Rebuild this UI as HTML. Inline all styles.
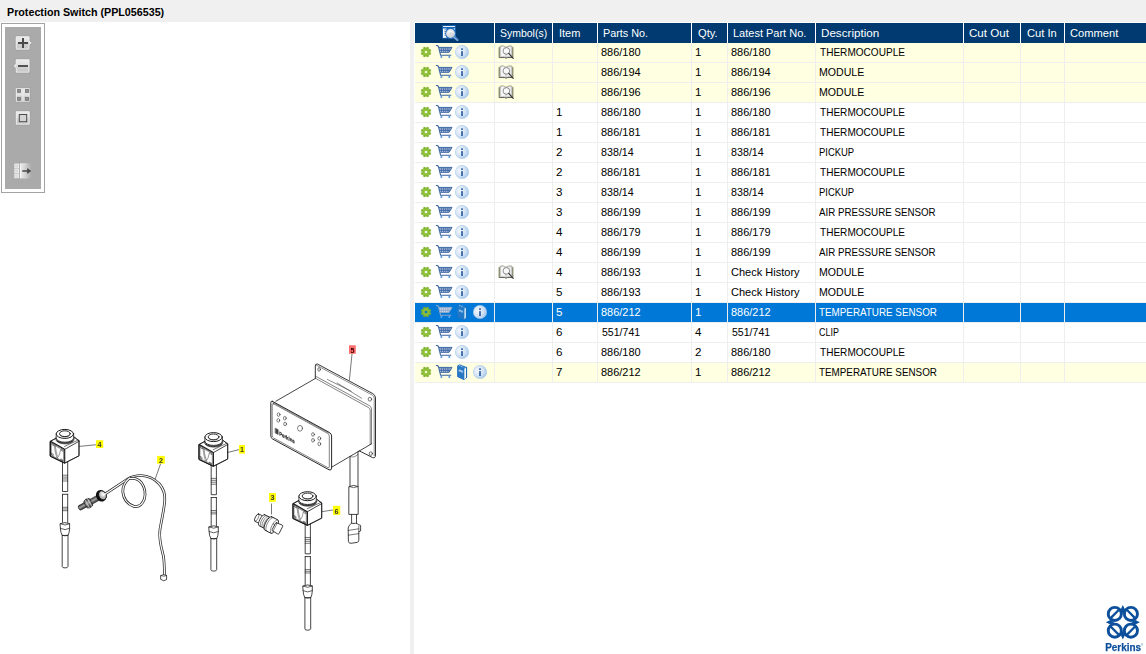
<!DOCTYPE html>
<html><head><meta charset="utf-8"><title>Protection Switch</title>
<style>
html,body{margin:0;padding:0;}
body{width:1146px;height:654px;overflow:hidden;background:#fff;font-family:"Liberation Sans",sans-serif;font-size:11.6px;color:#000;position:relative;}
#title{position:absolute;left:0;top:0;width:1146px;height:22px;background:#f0f0f0;}
#title .t{position:absolute;left:6px;top:3px;font-weight:bold;line-height:18px;}
#split{position:absolute;left:410px;top:22px;width:4px;height:632px;background:#f0f0f0;}
#tb{position:absolute;left:1px;top:23px;width:42px;height:168px;border:1px solid #a3a3a3;background:#fff;}
#tb i{position:absolute;left:3px;top:3px;width:36px;height:162px;background:#aaa;display:block;}
#grid{position:absolute;left:415px;top:23px;width:731px;}
.h{height:20px;background:#003a70;position:relative;color:#fff;}
.h div{position:absolute;top:0;height:20px;line-height:20px;white-space:nowrap;border-left:1px solid #fff;box-sizing:border-box;padding-left:5px;}
.r{height:20px;position:relative;background:#fff;border-bottom:1px solid #eeeeee;box-sizing:border-box;}
.r.y{background:#ffffe1;}
.r.s{background:#0078d7;color:#fff;}
.ct{color:#3c66a4;}
.s .ct{color:#8ea7cb;--bf:#f4f7fb;--wf:#6fb0f0;}
.s .k{opacity:.8;}
.c{position:absolute;top:0;height:19px;line-height:17px;white-space:nowrap;box-sizing:border-box;border-left:1px solid #eeeeee;padding-left:3px;}
.c0{left:0;width:79px;border-left:none;}
.c1{left:79px;width:58px;}
.c2{left:137px;width:45px;}
.c3{left:182px;width:94px;}
.c4{left:276px;width:36px;}
.c5{left:312px;width:88px;}
.c6{left:400px;width:148px;}
.c7{left:548px;width:57px;}
.c8{left:605px;width:44px;}
.c9{left:649px;width:82px;}
.t{display:inline-block;transform-origin:0 50%;white-space:nowrap;}
#dw,#logo{will-change:transform;}
.ic{position:absolute;overflow:visible;display:block;}
.g{left:5px;top:3px;width:12px;height:12px;}
.ct{left:21px;top:2px;width:17px;height:14px;}
.i1{left:40px;top:2px;width:14px;height:14px;}
.i2{left:58px;top:2px;width:14px;height:14px;}
.k{left:42px;top:1px;width:11px;height:17px;}
.sb{left:3px;top:2px;width:17px;height:14px;}
.hi{left:27px;top:2px;width:17px;height:17px;}
</style></head><body>
<svg width="0" height="0" style="position:absolute"><defs>
<radialGradient id="gi" cx="0.35" cy="0.4" r="0.7"><stop offset="0" stop-color="#f4f8fd"/><stop offset="0.55" stop-color="#d3e3f4"/><stop offset="1" stop-color="#9fc3e8"/></radialGradient>
<radialGradient id="gg" cx="0.5" cy="0.5" r="0.5"><stop offset="0" stop-color="#a6d444"/><stop offset="0.6" stop-color="#8cbf34"/><stop offset="1" stop-color="#76aa26"/></radialGradient>
<linearGradient id="gl" x1="0" y1="0" x2="1" y2="1"><stop offset="0" stop-color="#f2f4f6"/><stop offset="1" stop-color="#c4cad2"/></linearGradient>
<!-- gear: 12x12 box, centre 6,6 -->
<symbol id="gear" viewBox="0 0 12 12" overflow="visible"><path d="M9.68 6.41 L10.91 6.94 L10.14 8.81 L8.89 8.31 L8.31 8.89 L8.81 10.14 L6.94 10.91 L6.41 9.68 L5.59 9.68 L5.06 10.91 L3.19 10.14 L3.69 8.89 L3.11 8.31 L1.86 8.81 L1.09 6.94 L2.32 6.41 L2.32 5.59 L1.09 5.06 L1.86 3.19 L3.11 3.69 L3.69 3.11 L3.19 1.86 L5.06 1.09 L5.59 2.32 L6.41 2.32 L6.94 1.09 L8.81 1.86 L8.31 3.11 L8.89 3.69 L10.14 3.19 L10.91 5.06 L9.68 5.59Z M7.6 6 A1.6 1.6 0 1 0 4.4 6 A1.6 1.6 0 1 0 7.6 6 Z" fill="url(#gg)" fill-rule="evenodd" stroke="#7fb22b" stroke-width="0.6" stroke-linejoin="round"/></symbol>
<!-- cart: 17x14 box -->
<symbol id="cart" viewBox="0 0 17 14" overflow="visible">
<path d="M2.6 2.3 L16 2.3 L13 7.4 L4.4 7.4 Z" style="fill:var(--bf,#dfe8f4)" stroke="none"/>
<path d="M0.4 0.5 L1.6 0.6 L2.5 1.6 L4.6 10.3 L14.8 10.3" fill="none" stroke="currentColor" stroke-width="1.1" stroke-linejoin="round" stroke-linecap="round"/>
<path d="M2.6 2.4 L16 2.4 L13.1 7.3 L4 7.3" fill="none" stroke="currentColor" stroke-width="1" stroke-linejoin="round"/>
<path d="M3.2 4 L15 4 M3.6 5.6 L14 5.6" stroke="currentColor" stroke-width="0.9"/>
<path d="M5.3 2.6 L5.6 7.2 M7.3 2.6 L7.5 7.2 M9.3 2.6 L9.3 7.2 M11.3 2.6 L11.1 7.2 M13.2 2.6 L12.7 7.2" stroke="currentColor" stroke-width="0.8"/>
<circle cx="5.4" cy="11.9" r="1" style="fill:var(--wf,#4b93e0)"/><circle cx="13.3" cy="11.9" r="1" style="fill:var(--wf,#4b93e0)"/>
</symbol>
<!-- info: 14x14 box, centre 7,7 -->
<symbol id="info" viewBox="0 0 14 14" overflow="visible"><circle cx="7" cy="7" r="6.8" fill="url(#gi)"/><circle cx="7" cy="7" r="6.6" fill="none" stroke="#a5c6e8" stroke-width="0.5"/><rect x="6.1" y="3.3" width="1.8" height="1.7" fill="#3a67a6"/><rect x="6.1" y="6.1" width="1.8" height="4.9" fill="#3a67a6"/></symbol>
<!-- blue book: 11x17 box -->
<symbol id="bk" viewBox="0 0 11 17" overflow="visible">
<path d="M0.3 1.8 L2.6 0.3 L10.1 3.2 L10.1 13.4 L7 16 L0.3 12.8 Z" fill="#1f6db8"/>
<path d="M0.3 1.8 L7 4.5 L7 16 L0.3 12.8 Z" fill="#2878c4"/>
<path d="M7.3 4.6 L9 3.6 L9 13.6 L7.3 15.4 Z" fill="#f4f8fc"/>
<path d="M1 1.9 L2.7 0.9 L9.3 3.4 L7.4 4.4 Z" fill="#3f8ad2"/>
<path d="M2.2 1.6 L3.4 1.2 M4.2 2.4 L5.4 2" stroke="#d8e8f8" stroke-width="0.8"/>
<ellipse cx="2.9" cy="6.6" rx="1.3" ry="1.1" fill="#a9c8ea" transform="rotate(20 2.9 6.6)"/><ellipse cx="4.9" cy="7.5" rx="1.3" ry="1.1" fill="#a9c8ea" transform="rotate(20 4.9 7.5)"/>
</symbol>
<!-- symbol book with magnifier: 17x14 box -->
<symbol id="sym" viewBox="0 0 17 14" overflow="visible">
<path d="M1 2.2 L2.6 2.2 L2.6 0.9 L5.2 0.9 L8 2.2 L10.8 0.9 L13.6 0.9 L13.6 2.2 L15 2.2 L15 12.6 L9.5 12.6 L8 13.2 L6.5 12.6 L1 12.6 Z" fill="#d9d9d2" stroke="#8a8a70" stroke-width="0.6"/>
<path d="M2.6 1.5 L5.2 1.2 L8 2.6 L8 12.6 L6 11.6 L2.6 11.8 Z" fill="#f6f6f6" stroke="#999" stroke-width="0.4"/>
<path d="M13.6 1.5 L10.8 1.2 L8 2.6 L8 12.6 L10 11.6 L13.6 11.8 Z" fill="#ececec" stroke="#999" stroke-width="0.4"/>
<path d="M1.3 2.4 L1.3 12.4 M14.7 2.4 L14.7 12.4" stroke="#77775a" stroke-width="0.8"/>
<path d="M1.2 12.5 L6.5 12.5 L8 13.1 L9.5 12.5 L14.8 12.5" fill="none" stroke="#444" stroke-width="0.7"/>
<circle cx="8.4" cy="5.9" r="3.3" fill="#fff" fill-opacity="0.8" stroke="#555" stroke-width="0.65"/>
<path d="M10.8 8.3 L15.2 13.4" stroke="#333" stroke-width="1.15" stroke-linecap="round"/>
</symbol>
<!-- header icon: 17x17 box -->
<symbol id="hic" viewBox="0 0 17 17" overflow="visible">
<rect x="0.2" y="0.2" width="13.6" height="13.5" fill="#1668ba"/>
<rect x="1" y="1.1" width="11.9" height="0.9" fill="#fff"/>
<rect x="1" y="3.5" width="3.4" height="9.3" fill="#fff"/>
<rect x="11.6" y="3.4" width="1.3" height="1.3" fill="#e8f0fa"/>
<path d="M2.4 4.8 h1.6 M2.4 6.6 h1.6 M2.4 8.4 h1.6 M2.4 10.2 h1.6" stroke="#2a5a98" stroke-width="0.8"/>
<circle cx="8.6" cy="8.5" r="5.3" fill="#2a70bc"/>
<circle cx="8.6" cy="8.5" r="4.4" fill="url(#gl)"/>
<path d="M6 7.2 Q8.5 5.2 11.4 7.4" stroke="#fff" stroke-width="1" fill="none" stroke-opacity="0.9"/>
<path d="M12.2 11.9 L15.4 14.9" stroke="#7fa8da" stroke-width="2.3" stroke-linecap="round"/>
<path d="M12.6 11.5 L16 14.7" stroke="#2a66b0" stroke-width="0.7" stroke-linecap="round"/>
</symbol>
</defs></svg>
<div id="title"><span class="t" style="transform:scaleX(0.9241);margin-left:0.60px">Protection Switch (PPL056535)</span></div>
<div id="split"></div>
<div id="tb"><i></i></div>
<svg id="tbs" width="50" height="180" viewBox="0 22 50 180" style="position:absolute;left:0;top:22px">
<defs>
<linearGradient id="bg1" x1="0" y1="0" x2="0" y2="1"><stop offset="0" stop-color="#ececec"/><stop offset="0.48" stop-color="#dedede"/><stop offset="0.52" stop-color="#d2d2d2"/><stop offset="1" stop-color="#c4c4c4"/></linearGradient>
<linearGradient id="bg2" x1="0" y1="0" x2="1" y2="0"><stop offset="0" stop-color="#f0f0f0"/><stop offset="0.55" stop-color="#cacaca"/><stop offset="1" stop-color="#aaaaaa"/></linearGradient>
</defs>
<!-- zoom in -->
<path d="M15.4 36 H29.8 V41 L32.4 43 L29.8 45 V50 H15.4 Z" fill="url(#bg1)" stroke="#9c9c9c" stroke-width="0.7"/>
<path d="M16.3 36.9 H28.9 V41.4 L31 43 L28.9 44.6 V49.1 H16.3 Z" fill="none" stroke="#ececec" stroke-width="0.9"/>
<path d="M18 43 H28 M23 38 V48" stroke="#4a4a4a" stroke-width="2"/>
<!-- zoom out -->
<path d="M15.4 59 H29.8 V73 H15.4 V68 L12.8 66 L15.4 64 Z" fill="url(#bg1)" stroke="#9c9c9c" stroke-width="0.7"/>
<path d="M16.3 59.9 H28.9 V72.1 H16.3 V67.6 L14.2 66 L16.3 64.4 Z" fill="none" stroke="#ececec" stroke-width="0.9"/>
<path d="M18 66 H28" stroke="#525252" stroke-width="2"/>
<!-- grid -->
<rect x="15.4" y="88" width="14.6" height="14" fill="url(#bg1)" stroke="#9c9c9c" stroke-width="0.7"/>
<rect x="16.3" y="88.9" width="12.8" height="12.2" fill="none" stroke="#ececec" stroke-width="0.9"/>
<path d="M23.1 89.4 V100.6 M16.6 95 H28.8" stroke="#e8e8e8" stroke-width="1.2"/>
<g fill="#8e8e8e" stroke="#727272" stroke-width="0.7"><rect x="17.6" y="89.6" width="3" height="2.9"/><rect x="25.5" y="89.6" width="3.3" height="2.9"/><rect x="17.6" y="97.5" width="3" height="3.1"/><rect x="25.5" y="97.5" width="3.3" height="3.1"/></g>
<!-- single -->
<rect x="15.4" y="111" width="14.6" height="14" fill="url(#bg1)" stroke="#9c9c9c" stroke-width="0.7"/>
<rect x="16.3" y="111.9" width="12.8" height="12.2" fill="none" stroke="#ececec" stroke-width="0.9"/>
<rect x="19.3" y="114.5" width="7.4" height="7.2" fill="#d4d4d4" stroke="#4c4c4c" stroke-width="1"/>
<!-- export -->
<rect x="20" y="163.6" width="11.5" height="14.6" fill="url(#bg2)"/>
<path d="M20.4 163.6 V178.2" stroke="#f6f6f6" stroke-width="1"/>
<path d="M20 163.9 H27" stroke="#f0f0f0" stroke-width="0.6"/><path d="M20 178 H27" stroke="#e0e0e0" stroke-width="0.6"/>
<g fill="#dadada" stroke="#f0f0f0" stroke-width="0.8"><rect x="14.8" y="164" width="3.8" height="3.8"/><rect x="14.8" y="169" width="3.8" height="3.8"/><rect x="14.8" y="174" width="3.8" height="3.8"/></g>
<path d="M22.2 171 H28" stroke="#484848" stroke-width="1.5"/><path d="M27.2 168 L31.2 171 L27.2 174 Z" fill="#484848"/>
</svg>
<svg id="dw" width="410" height="632" viewBox="0 22 410 632" style="position:absolute;left:0;top:22px" fill="none" stroke="#1c1c1c" stroke-width="0.82" stroke-linecap="round" stroke-linejoin="round">
<!-- control box (5) -->
<g>
<!-- back plate -->
<path d="M315.3 366 Q315.3 363.6 317.4 364 L372.8 393.6 Q375.5 395.2 375.5 398 L375.5 455 Q375.5 458.4 372.8 457.4 L358.8 450.6 L331.6 467.4 L271 437.4 L271 402.6 L276 401 L315.3 378.4 Z" fill="#fff" stroke="none"/>
<path d="M315.3 378.4 L315.3 366 Q315.3 363.6 317.4 364 L372.8 393.6 Q375.5 395.2 375.5 398 L375.5 455 Q375.5 458.6 372.6 457.6 L359.2 450.8" stroke-width="0.9"/>
<path d="M316.6 365.3 L372.2 395 Q374.2 396.2 374.2 398.4 L374.2 455.6" stroke-width="0.5"/>
<ellipse cx="319.1" cy="369.4" rx="1.3" ry="1.8" stroke-width="0.6"/>
<ellipse cx="369.9" cy="399.2" rx="1.7" ry="1.9" stroke-width="0.6"/>
<ellipse cx="370.8" cy="453.6" rx="1.6" ry="1.8" stroke-width="0.6"/>
<!-- plate inner lines -->
<path d="M315.6 376.2 L369.6 405.8 Q371.5 407 371.5 409 L371.5 443.8 M316 378.6 L368.6 407.6 Q370.2 408.6 370.2 410.6 L370.2 444.4" stroke-width="0.55"/>
<path d="M327.3 379.4 L351.2 391.2 M337.1 383 L361.6 398.3" stroke-width="0.5"/>
<!-- box top-left edge -->
<path d="M275.9 401.2 L315.3 378.5"/>
<!-- box bottom-right edge -->
<path d="M331.6 467.2 L371.4 443.9"/>
<!-- bezel outer -->
<path d="M272.4 401.3 L329.6 432.6 Q331.6 433.8 331.6 436 L331.6 468 Q331.6 470.8 329 469.8 L272.6 439 Q270.8 438 270.8 435.8 L270.8 402.6 Q270.8 400.6 272.4 401.3 Z" fill="#fff" stroke-width="0.95"/>
<!-- bezel inner -->
<path d="M273.6 403.8 L327.6 433.4 Q329.3 434.4 329.3 436.4 L329.3 466.8 Q329.3 468.4 327.8 467.6 L273.6 438 Q272.2 437.2 272.2 435.6 L272.2 404.6 Q272.2 403.2 273.6 403.8 Z" stroke-width="0.55"/>
<path d="M273.2 402.6 L329.4 433.3" stroke-width="0.5"/>
<!-- holes -->
<g stroke-width="0.55">
<ellipse cx="278.6" cy="414.6" rx="1.4" ry="1.8"/><ellipse cx="278.3" cy="420.4" rx="1.4" ry="1.8"/><ellipse cx="284.8" cy="418.2" rx="1.4" ry="1.8"/><ellipse cx="285.1" cy="424" rx="1.4" ry="1.8"/>
<ellipse cx="300" cy="428.3" rx="2.5" ry="2.9"/>
<ellipse cx="313" cy="434.4" rx="1.4" ry="1.8"/><ellipse cx="313" cy="440.3" rx="1.4" ry="1.8"/><ellipse cx="319.3" cy="438.4" rx="1.4" ry="1.8"/><ellipse cx="319.3" cy="443.9" rx="1.4" ry="1.8"/>
</g>
<!-- tiny brand on front -->
<path d="M275.4 428.2 L278.2 429.7 L278.2 434.6 L275.4 433.1 Z" fill="#444" stroke-width="0.4"/>
<text transform="matrix(1 0.54 0 1 279.2 435.2)" font-family="Liberation Sans, sans-serif" font-weight="bold" font-size="5.4" fill="#333" stroke="#333" stroke-width="0.25" textLength="15.5" lengthAdjust="spacingAndGlyphs">Perkins</text>
<!-- cable under the box -->
<path d="M350 456.6 L350 485.8 M358 451.6 L358 485.8" />
<path d="M350.2 456.4 Q354 458.6 357.8 454.4" stroke-width="0.5"/>
<path d="M349.2 486.6 Q353.7 484.2 358.2 486.6 L358.2 514.4 L349.2 514.4 Z" fill="#fff"/>
<path d="M349.2 486.6 Q353.7 489 358.2 486.6" stroke-width="0.6"/>
<path d="M351.6 514.6 V523.6 M356.5 514.6 V523.4"/>
<path d="M351 523.6 Q348.4 525.4 348.2 528 L348.4 541.4 Q348.6 543.4 351 543.3 L357.2 542.4 Q358.8 542 358.8 540.2 L358.8 531.6 L360.6 531 L360.6 525.4 L358.6 524.6 Q357.4 523.4 356 523.4 Z" fill="#fff"/>
<path d="M348.3 530.4 L358.8 528.8 M348.3 535.2 L358.8 533.6 M358.8 531.6 L358.8 526" stroke-width="0.6"/>
</g>
<!-- leader 5 -->
<path d="M352 354.2 L349.4 380" stroke-width="0.6"/>
<rect x="349" y="345.3" width="6.8" height="8.5" fill="#ff6e6e" stroke="none"/>
<text x="352.4" y="352.6" text-anchor="middle" font-family="Liberation Sans, sans-serif" font-weight="bold" font-size="7.2" fill="#3a0000" stroke="none">5</text>
<g transform="translate(0 0)"><path d="M50.4 441.3 L56.2 438.1 L73.9 436.8 L79 440.8 L79 455.8 L64.7 463.1 L50.4 456.2 Z" fill="#fff"/><path d="M64.7 449.4 L79 441.3 M79 440.8 L79 455.8 L64.7 463.1"/><path d="M50.4 441.3 L56.3 438.1 M79 440.8 L73.9 436.8"/><path d="M64.5 446.5 L78.3 440" stroke-width="0.6"/><path d="M50.9 441.5 L64.2 449.1 Q64.7 449.4 64.7 450 L64.7 462.4 Q64.7 463.2 64 462.8 L50.9 456.5 Q50.4 456.2 50.4 455.6 L50.4 441.9 Q50.4 441.2 50.9 441.5 Z" stroke-width="1.15"/><path d="M51.6 442.7 L63.6 449.6 L63.6 461.4 L51.6 455.6 Z" stroke-width="0.5"/><path d="M52.2 443.4 l1.5 .9 l0 1.5 l-1.5 -.9z M61.5 449 l1.5 .9 l0 1.5 l-1.5 -.9z M51.8 453.4 l1.5 .8 l0 1.5 l-1.5 -.8z M61.2 459 l1.4 .8 l0 1.5 l-1.4 -.8z" stroke-width="0.5"/><path d="M54.3 445 Q55.4 455.6 57.3 458 Q59.6 456 60.7 449.6 M55.3 445.6 Q56.4 455 57.6 456.4 M55 445.6 Q57.6 447.4 60 448.4" stroke-width="0.45"/><g transform="translate(0 0.5)"><path d="M55.8 437.6 A9.1 4.4 0 0 0 74 437.6 L74 439 A9.1 4.4 0 0 1 55.8 439 Z" fill="#fff" stroke-width="0.7"/><path d="M57 440.6 A9.1 4.2 0 0 0 72.8 440.6" stroke-width="1"/><path d="M56.2 433.4 L56.2 437.4 A8.7 4.3 0 0 0 73.6 437.4 L73.6 433.4 Z" fill="#fff"/><ellipse cx="64.9" cy="433.4" rx="8.7" ry="4.5" fill="#fff" stroke-width="1"/><ellipse cx="64.9" cy="433.2" rx="5.4" ry="2.9" stroke-width="0.9"/><path d="M59.8 434.4 A5.4 2.9 0 0 0 70 434.4" stroke-width="0.5"/></g><path d="M62.5 462 L62.5 491.5 L67.7 491.5 L67.7 461.6"/><path d="M62.5 475.2 H67.7 M62.5 477.1 H67.7 M62.5 479 H67.7 M62.5 481 H67.7" stroke-width="0.6"/><path d="M62.5 494.3 H67.7 M62.5 494.3 V522.6 M67.7 494.3 V522.6"/><path d="M62.5 507.3 H67.7 M62.5 509 H67.7 M62.5 510.7 H67.7" stroke-width="0.6"/><path d="M60.4 523.6 Q65 521.6 69.6 523.6 L69.6 528.6 Q69.4 533 68 535.4 L62.2 535.4 Q60.6 533 60.4 528.6 Z" fill="#fff"/><path d="M60.4 523.8 Q65 526.4 69.6 523.8 M60.4 528.4 Q65 531 69.6 528.4 M62.2 535.3 Q65 536.6 68 535.3" stroke-width="0.7"/><path d="M62.2 535.6 V566.6 Q62.3 567.9 65 567.9 Q67.8 567.9 68 566.6 V535.6"/></g>
<g transform="translate(148.7 3.2)"><path d="M50.4 441.3 L56.2 438.1 L73.9 436.8 L79 440.8 L79 455.8 L64.7 463.1 L50.4 456.2 Z" fill="#fff"/><path d="M64.7 449.4 L79 441.3 M79 440.8 L79 455.8 L64.7 463.1"/><path d="M50.4 441.3 L56.3 438.1 M79 440.8 L73.9 436.8"/><path d="M64.5 446.5 L78.3 440" stroke-width="0.6"/><path d="M50.9 441.5 L64.2 449.1 Q64.7 449.4 64.7 450 L64.7 462.4 Q64.7 463.2 64 462.8 L50.9 456.5 Q50.4 456.2 50.4 455.6 L50.4 441.9 Q50.4 441.2 50.9 441.5 Z" stroke-width="1.15"/><path d="M51.6 442.7 L63.6 449.6 L63.6 461.4 L51.6 455.6 Z" stroke-width="0.5"/><path d="M52.2 443.4 l1.5 .9 l0 1.5 l-1.5 -.9z M61.5 449 l1.5 .9 l0 1.5 l-1.5 -.9z M51.8 453.4 l1.5 .8 l0 1.5 l-1.5 -.8z M61.2 459 l1.4 .8 l0 1.5 l-1.4 -.8z" stroke-width="0.5"/><path d="M54.3 445 Q55.4 455.6 57.3 458 Q59.6 456 60.7 449.6 M55.3 445.6 Q56.4 455 57.6 456.4 M55 445.6 Q57.6 447.4 60 448.4" stroke-width="0.45"/><g transform="translate(0 0.5)"><path d="M55.8 437.6 A9.1 4.4 0 0 0 74 437.6 L74 439 A9.1 4.4 0 0 1 55.8 439 Z" fill="#fff" stroke-width="0.7"/><path d="M57 440.6 A9.1 4.2 0 0 0 72.8 440.6" stroke-width="1"/><path d="M56.2 433.4 L56.2 437.4 A8.7 4.3 0 0 0 73.6 437.4 L73.6 433.4 Z" fill="#fff"/><ellipse cx="64.9" cy="433.4" rx="8.7" ry="4.5" fill="#fff" stroke-width="1"/><ellipse cx="64.9" cy="433.2" rx="5.4" ry="2.9" stroke-width="0.9"/><path d="M59.8 434.4 A5.4 2.9 0 0 0 70 434.4" stroke-width="0.5"/></g><path d="M62.5 462 L62.5 491.5 L67.7 491.5 L67.7 461.6"/><path d="M62.5 475.2 H67.7 M62.5 477.1 H67.7 M62.5 479 H67.7 M62.5 481 H67.7" stroke-width="0.6"/><path d="M62.5 494.3 H67.7 M62.5 494.3 V522.6 M67.7 494.3 V522.6"/><path d="M62.5 507.3 H67.7 M62.5 509 H67.7 M62.5 510.7 H67.7" stroke-width="0.6"/><path d="M60.4 523.6 Q65 521.6 69.6 523.6 L69.6 528.6 Q69.4 533 68 535.4 L62.2 535.4 Q60.6 533 60.4 528.6 Z" fill="#fff"/><path d="M60.4 523.8 Q65 526.4 69.6 523.8 M60.4 528.4 Q65 531 69.6 528.4 M62.2 535.3 Q65 536.6 68 535.3" stroke-width="0.7"/><path d="M62.2 535.6 V566.6 Q62.3 567.9 65 567.9 Q67.8 567.9 68 566.6 V535.6"/></g>
<g transform="translate(242.7 62.3)"><path d="M50.4 441.3 L56.2 438.1 L73.9 436.8 L79 440.8 L79 455.8 L64.7 463.1 L50.4 456.2 Z" fill="#fff"/><path d="M64.7 449.4 L79 441.3 M79 440.8 L79 455.8 L64.7 463.1"/><path d="M50.4 441.3 L56.3 438.1 M79 440.8 L73.9 436.8"/><path d="M64.5 446.5 L78.3 440" stroke-width="0.6"/><path d="M50.9 441.5 L64.2 449.1 Q64.7 449.4 64.7 450 L64.7 462.4 Q64.7 463.2 64 462.8 L50.9 456.5 Q50.4 456.2 50.4 455.6 L50.4 441.9 Q50.4 441.2 50.9 441.5 Z" stroke-width="1.15"/><path d="M51.6 442.7 L63.6 449.6 L63.6 461.4 L51.6 455.6 Z" stroke-width="0.5"/><path d="M52.2 443.4 l1.5 .9 l0 1.5 l-1.5 -.9z M61.5 449 l1.5 .9 l0 1.5 l-1.5 -.9z M51.8 453.4 l1.5 .8 l0 1.5 l-1.5 -.8z M61.2 459 l1.4 .8 l0 1.5 l-1.4 -.8z" stroke-width="0.5"/><path d="M54.3 445 Q55.4 455.6 57.3 458 Q59.6 456 60.7 449.6 M55.3 445.6 Q56.4 455 57.6 456.4 M55 445.6 Q57.6 447.4 60 448.4" stroke-width="0.45"/><g transform="translate(0 0.5)"><path d="M55.8 437.6 A9.1 4.4 0 0 0 74 437.6 L74 439 A9.1 4.4 0 0 1 55.8 439 Z" fill="#fff" stroke-width="0.7"/><path d="M57 440.6 A9.1 4.2 0 0 0 72.8 440.6" stroke-width="1"/><path d="M56.2 433.4 L56.2 437.4 A8.7 4.3 0 0 0 73.6 437.4 L73.6 433.4 Z" fill="#fff"/><ellipse cx="64.9" cy="433.4" rx="8.7" ry="4.5" fill="#fff" stroke-width="1"/><ellipse cx="64.9" cy="433.2" rx="5.4" ry="2.9" stroke-width="0.9"/><path d="M59.8 434.4 A5.4 2.9 0 0 0 70 434.4" stroke-width="0.5"/></g><path d="M62.5 462 L62.5 491.5 L67.7 491.5 L67.7 461.6"/><path d="M62.5 475.2 H67.7 M62.5 477.1 H67.7 M62.5 479 H67.7 M62.5 481 H67.7" stroke-width="0.6"/><path d="M62.5 494.3 H67.7 M62.5 494.3 V522.6 M67.7 494.3 V522.6"/><path d="M62.5 507.3 H67.7 M62.5 509 H67.7 M62.5 510.7 H67.7" stroke-width="0.6"/><path d="M60.4 523.6 Q65 521.6 69.6 523.6 L69.6 528.6 Q69.4 533 68 535.4 L62.2 535.4 Q60.6 533 60.4 528.6 Z" fill="#fff"/><path d="M60.4 523.8 Q65 526.4 69.6 523.8 M60.4 528.4 Q65 531 69.6 528.4 M62.2 535.3 Q65 536.6 68 535.3" stroke-width="0.7"/><path d="M62.2 535.6 V566.6 Q62.3 567.9 65 567.9 Q67.8 567.9 68 566.6 V535.6"/></g>
<!-- cable (2) -->
<defs>
<linearGradient id="pg" x1="0" y1="0" x2="0" y2="1"><stop offset="0" stop-color="#3c3c3c"/><stop offset="0.45" stop-color="#a2a2a2"/><stop offset="1" stop-color="#2e2e2e"/></linearGradient>
<radialGradient id="pr" cx="0.6" cy="0.4" r="0.6"><stop offset="0" stop-color="#ffffff"/><stop offset="1" stop-color="#9a9a9a"/></radialGradient>
</defs>
<g>
<path id="cb2" d="M104.5 494.4 L128 478.8 Q133 475.6 141 475.5 Q152 476 159.4 484 Q165.4 491 164.8 500 C164.4 508 161.5 520 159.9 530 C158.6 540 162 550 163.4 556 C164.4 562 164.4 568 164.4 574.4" stroke="#2a2a2a" stroke-width="2.7"/>
<path d="M104.5 494.4 L128 478.8 Q133 475.6 141 475.5 Q152 476 159.4 484 Q165.4 491 164.8 500 C164.4 508 161.5 520 159.9 530 C158.6 540 162 550 163.4 556 C164.4 562 164.4 568 164.4 574.4" stroke="#fff" stroke-width="1.2"/>
<path d="M129.6 478 Q122.4 484 122.8 492 Q124 503 134 506.4 Q141 507.6 144.4 499 Q146.6 490 141.6 483 Q137 477.6 130.6 478.6" stroke="#2a2a2a" stroke-width="2.7"/>
<path d="M129.6 478 Q122.4 484 122.8 492 Q124 503 134 506.4 Q141 507.6 144.4 499 Q146.6 490 141.6 483 Q137 477.6 130.6 478.6" stroke="#fff" stroke-width="1.2"/>
<path d="M161 575.4 Q163.8 574 166.6 575.4 L166.6 579.6 Q163.8 582 161 579.6 Z" fill="#fff" stroke-width="0.8"/>
<path d="M161 575.6 Q163.8 577.4 166.6 575.6" stroke-width="0.5"/>
<!-- probe -->
<g transform="translate(80.2 507.7) rotate(-28.8)">
<rect x="-1.6" y="-2.4" width="9" height="4.8" rx="1.6" fill="url(#pg)" stroke="#222" stroke-width="0.7"/>
<rect x="10" y="-2.7" width="12" height="5.4" fill="url(#pg)" stroke="#333" stroke-width="0.5"/>
<path d="M6.2 -3.6 L8 -4.6 L10.8 -4.6 L12.4 -3.6 L12.4 3.6 L10.8 4.6 L8 4.6 L6.2 3.6 Z" fill="url(#pg)" stroke="#222" stroke-width="0.7"/>
<path d="M8 -4.6 V4.6 M10.8 -4.6 V4.6" stroke="#eee" stroke-width="0.6"/>
</g>
<ellipse cx="101.2" cy="495.8" rx="5.1" ry="5.9" fill="#111" stroke="none" transform="rotate(-28 101.2 495.8)"/>
<ellipse cx="102.5" cy="495.3" rx="3.7" ry="4.7" fill="url(#pr)" stroke="#111" stroke-width="0.8" transform="rotate(-28 102.5 495.3)"/>
<path d="M103.4 495.2 L106 493.4" stroke="#fff" stroke-width="1.2"/>
</g>
<path d="M160.5 464 L155.3 478.7" stroke-width="0.6"/>
<rect x="157.1" y="455.9" width="7.7" height="7.8" fill="#ffff00" stroke="none"/>
<text x="160.9" y="462.6" text-anchor="middle" font-family="Liberation Sans, sans-serif" font-weight="bold" font-size="7.2" fill="#333" stroke="none">2</text>
<!-- part 3 -->
<g transform="translate(256.8 517.6) rotate(27) scale(0.94)">
<path d="M0 -4.4 L7 -4.4 L7 4.4 L0 4.4 A1.6 4.4 0 0 1 0 -4.4 Z" fill="#fff"/>
<path d="M0 -4.4 A1.6 4.4 0 0 1 0 4.4" stroke-width="0.5"/>
<path d="M6 -6.6 L14 -6.6 L14 6.6 L6 6.6 A2.2 6.6 0 0 1 6 -6.6 Z" fill="#fff"/>
<path d="M8 -6.6 A2.2 6.6 0 0 0 8 6.6 M10 -6.6 A2.2 6.6 0 0 0 10 6.6 M12 -6.6 A2.2 6.6 0 0 0 12 6.6" stroke-width="0.5"/>
<path d="M13.6 -8 L21 -8 A2.8 8 0 0 1 21 8 L13.6 8 A2.8 8 0 0 1 13.6 -8 Z" fill="#fff" stroke-width="0.9"/>
<path d="M15.6 -8 A2.8 8 0 0 0 15.6 8 M21 -8 A2.8 8 0 0 0 21 8" stroke-width="0.5"/>
<path d="M21.4 -4.6 L27.6 -5.2 Q28.8 -5 28.8 -4 L28.8 4.4 Q28.8 5.4 27.6 5.4 L21.4 5 Q20.4 4.8 20.4 3.8 L20.4 -3.6 Q20.4 -4.6 21.4 -4.6 Z" fill="#fff" stroke-width="0.8"/>
<path d="M22 -4.6 L22 5 M20.6 -1 L18.6 -2.6" stroke-width="0.5"/>
</g>
<path d="M271.5 504 L271.5 514" stroke-width="0.6"/>
<rect x="269" y="493" width="6.9" height="8.8" fill="#ffff00" stroke="none"/>
<text x="272.4" y="500.4" text-anchor="middle" font-family="Liberation Sans, sans-serif" font-weight="bold" font-size="7.2" fill="#333" stroke="none">3</text>
<g stroke-width="0.6"><path d="M79.3 446.4 L95.5 444.8"/><path d="M227.9 452.4 L238.9 449.7"/><path d="M322.2 511.6 L332.8 510"/></g>
<rect x="96" y="440.2" width="7.2" height="7.8" fill="#ffff00" stroke="none"/><text x="99.6" y="446.8" text-anchor="middle" font-family="Liberation Sans, sans-serif" font-weight="bold" font-size="7.2" fill="#333" stroke="none">4</text><rect x="239" y="445" width="6" height="8.6" fill="#ffff00" stroke="none"/><text x="242.0" y="452.40000000000003" text-anchor="middle" font-family="Liberation Sans, sans-serif" font-weight="bold" font-size="7.2" fill="#333" stroke="none">1</text><rect x="333" y="505.8" width="7.2" height="9" fill="#ffff00" stroke="none"/><text x="336.6" y="513.5999999999999" text-anchor="middle" font-family="Liberation Sans, sans-serif" font-weight="bold" font-size="7.2" fill="#333" stroke="none">6</text>
</svg>
<div id="grid">
<div class="h"><div class="c0" style="border-left:none"><svg class="ic hi"><use href="#hic"/></svg></div><div class="c1"><span class="t" style="transform:scaleX(0.9038);margin-left:0.40px">Symbol(s)</span></div><div class="c2"><span class="t" style="transform:scaleX(0.9482);margin-left:0.80px">Item</span></div><div class="c3"><span class="t" style="transform:scaleX(0.9333);margin-left:0.20px">Parts No.</span></div><div class="c4"><span class="t" style="transform:scaleX(0.9600);margin-left:0.80px">Qty.</span></div><div class="c5"><span class="t" style="transform:scaleX(0.9481);margin-left:0.40px">Latest Part No.</span></div><div class="c6"><span class="t" style="transform:scaleX(1.0035);margin-left:0.20px">Description</span></div><div class="c7"><span class="t" style="transform:scaleX(1.0002);margin-left:0.20px">Cut Out</span></div><div class="c8"><span class="t" style="transform:scaleX(0.9613);margin-left:0.60px">Cut In</span></div><div class="c9"><span class="t" style="transform:scaleX(0.9609)">Comment</span></div></div>
<div class="r y"><div class="c c0"><svg class="ic g"><use href="#gear"/></svg><svg class="ic ct"><use href="#cart"/></svg><svg class="ic i1"><use href="#info"/></svg></div><div class="c c1"><svg class="ic sb"><use href="#sym"/></svg></div><div class="c c2"></div><div class="c c3"><span class="t" style="transform:scaleX(0.9452);margin-left:0.40px">886/180</span></div><div class="c c4"><span class="t">1</span></div><div class="c c5"><span class="t" style="transform:scaleX(0.9452);margin-left:0.40px">886/180</span></div><div class="c c6"><span class="t" style="transform:scaleX(0.8674);margin-left:0.60px">THERMOCOUPLE</span></div><div class="c c7"></div><div class="c c8"></div><div class="c c9"></div></div>
<div class="r y"><div class="c c0"><svg class="ic g"><use href="#gear"/></svg><svg class="ic ct"><use href="#cart"/></svg><svg class="ic i1"><use href="#info"/></svg></div><div class="c c1"><svg class="ic sb"><use href="#sym"/></svg></div><div class="c c2"></div><div class="c c3"><span class="t" style="transform:scaleX(0.9452);margin-left:0.40px">886/194</span></div><div class="c c4"><span class="t">1</span></div><div class="c c5"><span class="t" style="transform:scaleX(0.9452);margin-left:0.40px">886/194</span></div><div class="c c6"><span class="t" style="transform:scaleX(0.9120)">MODULE</span></div><div class="c c7"></div><div class="c c8"></div><div class="c c9"></div></div>
<div class="r y"><div class="c c0"><svg class="ic g"><use href="#gear"/></svg><svg class="ic ct"><use href="#cart"/></svg><svg class="ic i1"><use href="#info"/></svg></div><div class="c c1"><svg class="ic sb"><use href="#sym"/></svg></div><div class="c c2"></div><div class="c c3"><span class="t" style="transform:scaleX(0.9452);margin-left:0.40px">886/196</span></div><div class="c c4"><span class="t">1</span></div><div class="c c5"><span class="t" style="transform:scaleX(0.9452);margin-left:0.40px">886/196</span></div><div class="c c6"><span class="t" style="transform:scaleX(0.9120)">MODULE</span></div><div class="c c7"></div><div class="c c8"></div><div class="c c9"></div></div>
<div class="r w"><div class="c c0"><svg class="ic g"><use href="#gear"/></svg><svg class="ic ct"><use href="#cart"/></svg><svg class="ic i1"><use href="#info"/></svg></div><div class="c c1"></div><div class="c c2"><span class="t">1</span></div><div class="c c3"><span class="t" style="transform:scaleX(0.9452);margin-left:0.40px">886/180</span></div><div class="c c4"><span class="t">1</span></div><div class="c c5"><span class="t" style="transform:scaleX(0.9452);margin-left:0.40px">886/180</span></div><div class="c c6"><span class="t" style="transform:scaleX(0.8674);margin-left:0.60px">THERMOCOUPLE</span></div><div class="c c7"></div><div class="c c8"></div><div class="c c9"></div></div>
<div class="r w"><div class="c c0"><svg class="ic g"><use href="#gear"/></svg><svg class="ic ct"><use href="#cart"/></svg><svg class="ic i1"><use href="#info"/></svg></div><div class="c c1"></div><div class="c c2"><span class="t">1</span></div><div class="c c3"><span class="t" style="transform:scaleX(0.9452);margin-left:0.40px">886/181</span></div><div class="c c4"><span class="t">1</span></div><div class="c c5"><span class="t" style="transform:scaleX(0.9452);margin-left:0.40px">886/181</span></div><div class="c c6"><span class="t" style="transform:scaleX(0.8674);margin-left:0.60px">THERMOCOUPLE</span></div><div class="c c7"></div><div class="c c8"></div><div class="c c9"></div></div>
<div class="r w"><div class="c c0"><svg class="ic g"><use href="#gear"/></svg><svg class="ic ct"><use href="#cart"/></svg><svg class="ic i1"><use href="#info"/></svg></div><div class="c c1"></div><div class="c c2"><span class="t">2</span></div><div class="c c3"><span class="t" style="transform:scaleX(0.9250);margin-left:0.40px">838/14</span></div><div class="c c4"><span class="t">1</span></div><div class="c c5"><span class="t" style="transform:scaleX(0.9250);margin-left:0.40px">838/14</span></div><div class="c c6"><span class="t" style="transform:scaleX(0.8141)">PICKUP</span></div><div class="c c7"></div><div class="c c8"></div><div class="c c9"></div></div>
<div class="r w"><div class="c c0"><svg class="ic g"><use href="#gear"/></svg><svg class="ic ct"><use href="#cart"/></svg><svg class="ic i1"><use href="#info"/></svg></div><div class="c c1"></div><div class="c c2"><span class="t">2</span></div><div class="c c3"><span class="t" style="transform:scaleX(0.9452);margin-left:0.40px">886/181</span></div><div class="c c4"><span class="t">1</span></div><div class="c c5"><span class="t" style="transform:scaleX(0.9452);margin-left:0.40px">886/181</span></div><div class="c c6"><span class="t" style="transform:scaleX(0.8674);margin-left:0.60px">THERMOCOUPLE</span></div><div class="c c7"></div><div class="c c8"></div><div class="c c9"></div></div>
<div class="r w"><div class="c c0"><svg class="ic g"><use href="#gear"/></svg><svg class="ic ct"><use href="#cart"/></svg><svg class="ic i1"><use href="#info"/></svg></div><div class="c c1"></div><div class="c c2"><span class="t">3</span></div><div class="c c3"><span class="t" style="transform:scaleX(0.9250);margin-left:0.40px">838/14</span></div><div class="c c4"><span class="t">1</span></div><div class="c c5"><span class="t" style="transform:scaleX(0.9250);margin-left:0.40px">838/14</span></div><div class="c c6"><span class="t" style="transform:scaleX(0.8141)">PICKUP</span></div><div class="c c7"></div><div class="c c8"></div><div class="c c9"></div></div>
<div class="r w"><div class="c c0"><svg class="ic g"><use href="#gear"/></svg><svg class="ic ct"><use href="#cart"/></svg><svg class="ic i1"><use href="#info"/></svg></div><div class="c c1"></div><div class="c c2"><span class="t">3</span></div><div class="c c3"><span class="t" style="transform:scaleX(0.9452);margin-left:0.40px">886/199</span></div><div class="c c4"><span class="t">1</span></div><div class="c c5"><span class="t" style="transform:scaleX(0.9452);margin-left:0.40px">886/199</span></div><div class="c c6"><span class="t" style="transform:scaleX(0.8420);margin-left:0.40px">AIR PRESSURE SENSOR</span></div><div class="c c7"></div><div class="c c8"></div><div class="c c9"></div></div>
<div class="r w"><div class="c c0"><svg class="ic g"><use href="#gear"/></svg><svg class="ic ct"><use href="#cart"/></svg><svg class="ic i1"><use href="#info"/></svg></div><div class="c c1"></div><div class="c c2"><span class="t">4</span></div><div class="c c3"><span class="t" style="transform:scaleX(0.9452);margin-left:0.40px">886/179</span></div><div class="c c4"><span class="t">1</span></div><div class="c c5"><span class="t" style="transform:scaleX(0.9452);margin-left:0.40px">886/179</span></div><div class="c c6"><span class="t" style="transform:scaleX(0.8674);margin-left:0.60px">THERMOCOUPLE</span></div><div class="c c7"></div><div class="c c8"></div><div class="c c9"></div></div>
<div class="r w"><div class="c c0"><svg class="ic g"><use href="#gear"/></svg><svg class="ic ct"><use href="#cart"/></svg><svg class="ic i1"><use href="#info"/></svg></div><div class="c c1"></div><div class="c c2"><span class="t">4</span></div><div class="c c3"><span class="t" style="transform:scaleX(0.9452);margin-left:0.40px">886/199</span></div><div class="c c4"><span class="t">1</span></div><div class="c c5"><span class="t" style="transform:scaleX(0.9452);margin-left:0.40px">886/199</span></div><div class="c c6"><span class="t" style="transform:scaleX(0.8420);margin-left:0.40px">AIR PRESSURE SENSOR</span></div><div class="c c7"></div><div class="c c8"></div><div class="c c9"></div></div>
<div class="r w"><div class="c c0"><svg class="ic g"><use href="#gear"/></svg><svg class="ic ct"><use href="#cart"/></svg><svg class="ic i1"><use href="#info"/></svg></div><div class="c c1"><svg class="ic sb"><use href="#sym"/></svg></div><div class="c c2"><span class="t">4</span></div><div class="c c3"><span class="t" style="transform:scaleX(0.9452);margin-left:0.40px">886/193</span></div><div class="c c4"><span class="t">1</span></div><div class="c c5"><span class="t" style="transform:scaleX(0.9507);margin-left:0.20px">Check History</span></div><div class="c c6"><span class="t" style="transform:scaleX(0.9120)">MODULE</span></div><div class="c c7"></div><div class="c c8"></div><div class="c c9"></div></div>
<div class="r w"><div class="c c0"><svg class="ic g"><use href="#gear"/></svg><svg class="ic ct"><use href="#cart"/></svg><svg class="ic i1"><use href="#info"/></svg></div><div class="c c1"></div><div class="c c2"><span class="t">5</span></div><div class="c c3"><span class="t" style="transform:scaleX(0.9452);margin-left:0.40px">886/193</span></div><div class="c c4"><span class="t">1</span></div><div class="c c5"><span class="t" style="transform:scaleX(0.9507);margin-left:0.20px">Check History</span></div><div class="c c6"><span class="t" style="transform:scaleX(0.9120)">MODULE</span></div><div class="c c7"></div><div class="c c8"></div><div class="c c9"></div></div>
<div class="r s"><div class="c c0"><svg class="ic g"><use href="#gear"/></svg><svg class="ic ct"><use href="#cart"/></svg><svg class="ic k"><use href="#bk"/></svg><svg class="ic i2"><use href="#info"/></svg></div><div class="c c1"></div><div class="c c2"><span class="t">5</span></div><div class="c c3"><span class="t" style="transform:scaleX(0.9452);margin-left:0.40px">886/212</span></div><div class="c c4"><span class="t">1</span></div><div class="c c5"><span class="t" style="transform:scaleX(0.9452);margin-left:0.40px">886/212</span></div><div class="c c6"><span class="t" style="transform:scaleX(0.8489)">TEMPERATURE SENSOR</span></div><div class="c c7"></div><div class="c c8"></div><div class="c c9"></div></div>
<div class="r w"><div class="c c0"><svg class="ic g"><use href="#gear"/></svg><svg class="ic ct"><use href="#cart"/></svg><svg class="ic i1"><use href="#info"/></svg></div><div class="c c1"></div><div class="c c2"><span class="t">6</span></div><div class="c c3"><span class="t" style="transform:scaleX(0.9095);margin-left:0.60px">551/741</span></div><div class="c c4"><span class="t">4</span></div><div class="c c5"><span class="t" style="transform:scaleX(0.9095);margin-left:0.60px">551/741</span></div><div class="c c6"><span class="t" style="transform:scaleX(0.7697)">CLIP</span></div><div class="c c7"></div><div class="c c8"></div><div class="c c9"></div></div>
<div class="r w"><div class="c c0"><svg class="ic g"><use href="#gear"/></svg><svg class="ic ct"><use href="#cart"/></svg><svg class="ic i1"><use href="#info"/></svg></div><div class="c c1"></div><div class="c c2"><span class="t">6</span></div><div class="c c3"><span class="t" style="transform:scaleX(0.9452);margin-left:0.40px">886/180</span></div><div class="c c4"><span class="t">2</span></div><div class="c c5"><span class="t" style="transform:scaleX(0.9452);margin-left:0.40px">886/180</span></div><div class="c c6"><span class="t" style="transform:scaleX(0.8674);margin-left:0.60px">THERMOCOUPLE</span></div><div class="c c7"></div><div class="c c8"></div><div class="c c9"></div></div>
<div class="r y"><div class="c c0"><svg class="ic g"><use href="#gear"/></svg><svg class="ic ct"><use href="#cart"/></svg><svg class="ic k"><use href="#bk"/></svg><svg class="ic i2"><use href="#info"/></svg></div><div class="c c1"></div><div class="c c2"><span class="t">7</span></div><div class="c c3"><span class="t" style="transform:scaleX(0.9452);margin-left:0.40px">886/212</span></div><div class="c c4"><span class="t">1</span></div><div class="c c5"><span class="t" style="transform:scaleX(0.9452);margin-left:0.40px">886/212</span></div><div class="c c6"><span class="t" style="transform:scaleX(0.8489)">TEMPERATURE SENSOR</span></div><div class="c c7"></div><div class="c c8"></div><div class="c c9"></div></div>
</div>
<svg id="logo" width="80" height="64" viewBox="1066 590 80 64" style="position:absolute;left:1066px;top:590px">
<g fill="none" stroke="#0c4f9c" stroke-width="2.9">
<circle cx="1114.8" cy="613.9" r="6.55"/><circle cx="1130.9" cy="613.9" r="6.55"/><circle cx="1114.8" cy="630.7" r="6.55"/><circle cx="1130.9" cy="630.7" r="6.55"/>
<g stroke-width="2.3"><path d="M1110.4 618.4 L1119.4 609.2"/><path d="M1135.3 618.4 L1126.3 609.2"/><path d="M1110.4 626.2 L1119.4 635.4"/><path d="M1135.3 626.2 L1126.3 635.4"/></g>
</g>
<g fill="#0c4f9c" stroke="none">
<path d="M1122.85 605 L1125.1 609.8 L1122.85 614.2 L1120.6 609.8 Z"/><path d="M1122.85 639.6 L1125.1 634.8 L1122.85 630.4 L1120.6 634.8 Z"/><path d="M1105.8 622.3 L1110.4 620 L1114.6 622.3 L1110.4 624.6 Z"/><path d="M1139.9 622.3 L1135.3 620 L1131.1 622.3 L1135.3 624.6 Z"/>
</g>
<text x="1105.2" y="650.8" font-family="Liberation Sans, sans-serif" font-weight="bold" font-size="10.5" fill="#0c4f9c" stroke="#0c4f9c" stroke-width="0.25" textLength="35.8" lengthAdjust="spacingAndGlyphs">Perkins</text>
<text x="1141" y="646.4" font-family="Liberation Sans, sans-serif" font-size="2.6" fill="#0c4f9c">®</text>
</svg>
</body></html>
